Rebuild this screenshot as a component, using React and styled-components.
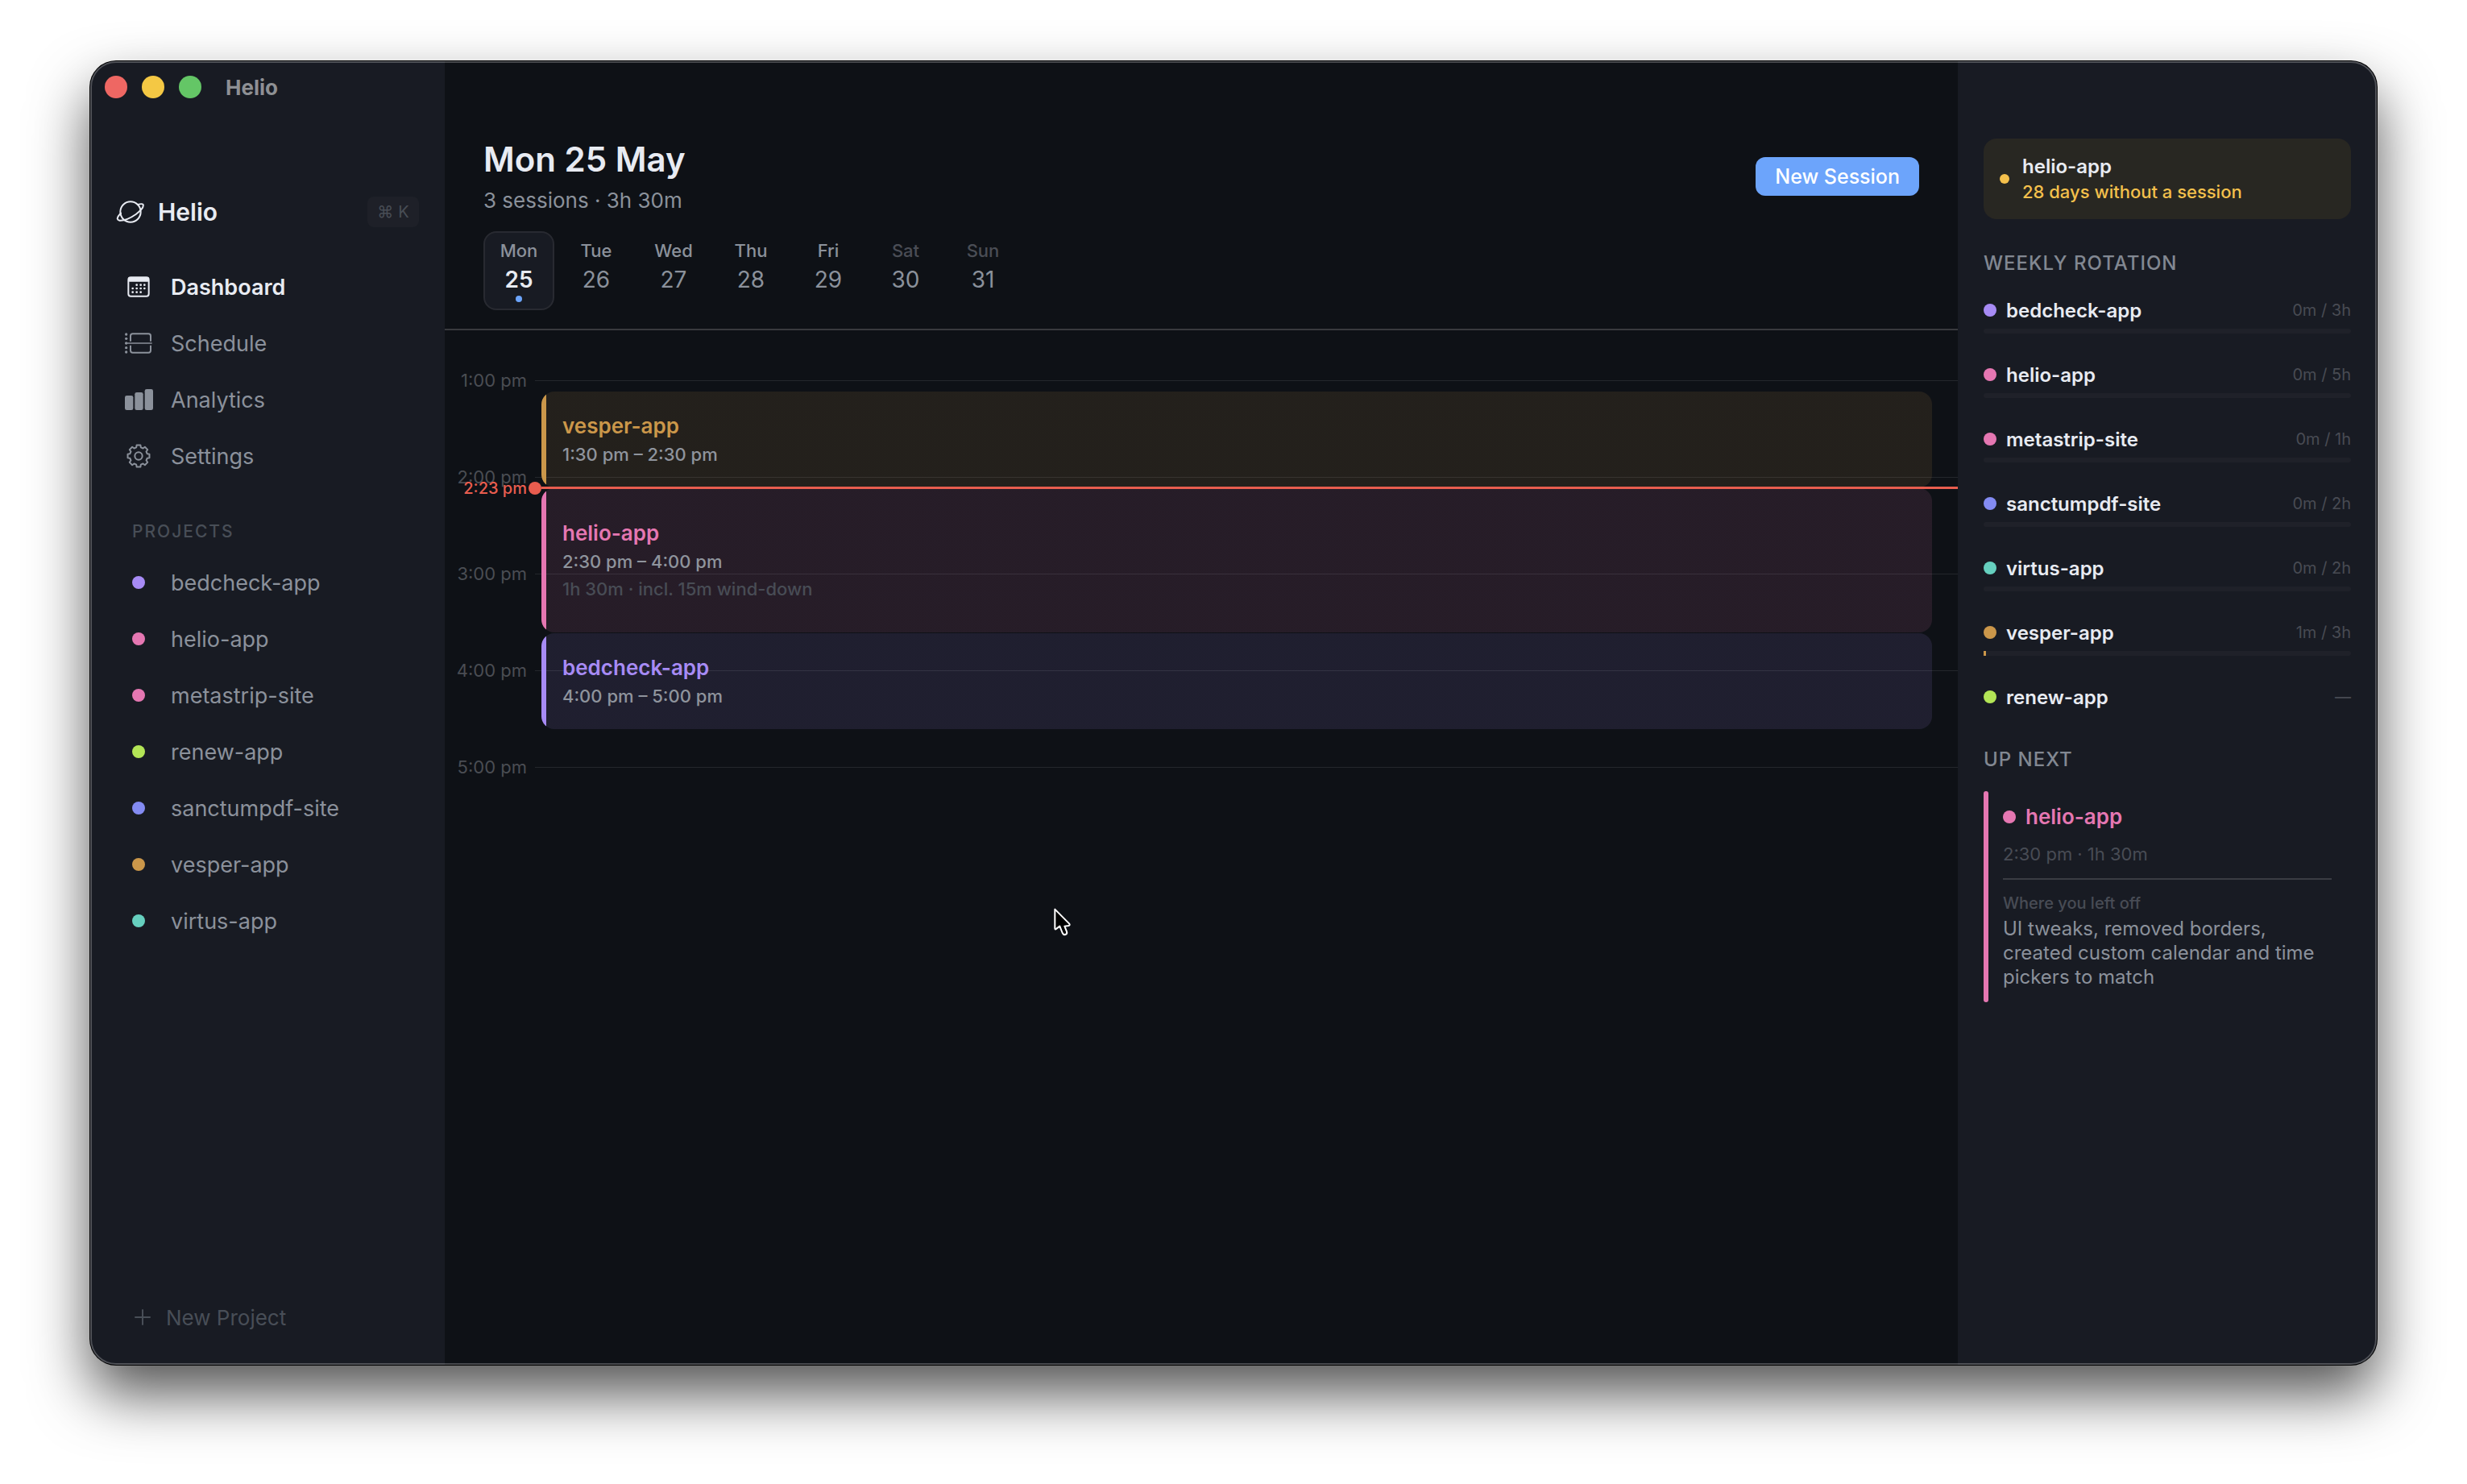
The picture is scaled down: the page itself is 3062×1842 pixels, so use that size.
import React from 'react';
import styled, { createGlobalStyle } from 'styled-components';

const colors = {
    violet: '#a78bf5',
    pink: '#e577b2',
    lime: '#b3e556',
    indigo: '#838bf2',
    amber: '#cb974a',
    teal: '#66d0bf',
};

const projects = [
    { name: 'bedcheck-app', color: colors.violet },
    { name: 'helio-app', color: colors.pink },
    { name: 'metastrip-site', color: colors.pink },
    { name: 'renew-app', color: colors.lime },
    { name: 'sanctumpdf-site', color: colors.indigo },
    { name: 'vesper-app', color: colors.amber },
    { name: 'virtus-app', color: colors.teal },
];

const days = [
    { name: 'Mon', date: 25, active: true },
    { name: 'Tue', date: 26 },
    { name: 'Wed', date: 27 },
    { name: 'Thu', date: 28 },
    { name: 'Fri', date: 29 },
    { name: 'Sat', date: 30, weekend: true },
    { name: 'Sun', date: 31, weekend: true },
];

const hours = ['1:00 pm', '2:00 pm', '3:00 pm', '4:00 pm', '5:00 pm'];

const sessions = [
    { name: 'vesper-app', color: colors.amber, time: '1:30 pm – 2:30 pm', minutes: 60 },
    { name: 'helio-app', color: colors.pink, time: '2:30 pm – 4:00 pm', minutes: 90, note: '1h 30m · incl. 15m wind-down' },
    { name: 'bedcheck-app', color: colors.violet, time: '4:00 pm – 5:00 pm', minutes: 60 },
];

const rotation = [
    { name: 'bedcheck-app', color: colors.violet, done: 0, target: 3 },
    { name: 'helio-app', color: colors.pink, done: 0, target: 5 },
    { name: 'metastrip-site', color: colors.pink, done: 0, target: 1 },
    { name: 'sanctumpdf-site', color: colors.indigo, done: 0, target: 2 },
    { name: 'virtus-app', color: colors.teal, done: 0, target: 2 },
    { name: 'vesper-app', color: colors.amber, done: 1, target: 3 },
    { name: 'renew-app', color: colors.lime },
];

// eight teeth around a 108 x 108 box
const gearPoints = Array.from({ length: 8 }, (_, i) =>
    [[-15, 33], [-10, 41], [10, 41], [15, 33]].map(([offset, r]) => {
        const a = ((i * 45 + offset) * Math.PI) / 180;
        return `${(54 + r * Math.sin(a)).toFixed(1)},${(54 - r * Math.cos(a)).toFixed(1)}`;
    }).join(' ')
).join(' ');

const PlanetIcon = () => (
    <svg width="36" height="30" viewBox="12 23 108 90" fill="none" stroke="currentColor" strokeWidth="6" strokeLinecap="round" aria-hidden="true">
        <circle cx="66" cy="68" r="38" />
        <path d="M93 41 Q110 36 113 41 Q117 54 86 77 Q50 102 25 100 Q11 97 22 82 Q25 77 30 73" />
    </svg>
);

const CalendarIcon = () => (
    <svg width="36" height="36" viewBox="0 0 108 108" fill="currentColor" aria-hidden="true">
        <rect x="16" y="19" width="76" height="70" rx="9" fill="none" stroke="currentColor" strokeWidth="6" />
        <rect x="15" y="18" width="78" height="17" rx="5" />
        {[[47, 47], [62, 47], [76, 47], [32, 60], [47, 60], [62, 60], [76, 60], [32, 74], [47, 74], [62, 74]].map(([x, y]) => (
            <circle key={`${x}-${y}`} cx={x} cy={y} r="4" />
        ))}
    </svg>
);

const ScheduleIcon = () => (
    <svg width="36" height="36" viewBox="0 0 108 108" fill="none" stroke="currentColor" strokeWidth="6" aria-hidden="true">
        <path d="M24 47 V27 Q24 19 32 19 H91 Q99 19 99 27 V47" />
        <path d="M24 62 V81 Q24 89 32 89 H91 Q99 89 99 81 V62" />
        <path d="M4 54 H104" strokeWidth="5" />
        {[21, 37, 54, 71, 87].map(y => <circle key={y} cx="8" cy={y} r="5" fill="currentColor" stroke="none" />)}
    </svg>
);

const AnalyticsIcon = () => (
    <svg width="36" height="36" viewBox="0 0 108 108" fill="currentColor" aria-hidden="true">
        <rect x="3" y="39" width="31" height="54" rx="7" />
        <rect x="40" y="27" width="31" height="66" rx="7" />
        <rect x="77" y="15" width="31" height="78" rx="7" />
    </svg>
);

const SettingsIcon = () => (
    <svg width="36" height="36" viewBox="0 0 108 108" fill="none" stroke="currentColor" strokeWidth="6" strokeLinejoin="round" aria-hidden="true">
        <polygon points={gearPoints} />
        <circle cx="54" cy="54" r="14" />
    </svg>
);

const PlusIcon = () => (
    <svg width="20" height="20" viewBox="0 0 20 20" fill="none" stroke="currentColor" strokeWidth="2" strokeLinecap="round" aria-hidden="true">
        <path d="M10 1 V19 M1 10 H19" />
    </svg>
);

const links = [
    { label: 'Dashboard', Icon: CalendarIcon, active: true },
    { label: 'Schedule', Icon: ScheduleIcon },
    { label: 'Analytics', Icon: AnalyticsIcon },
    { label: 'Settings', Icon: SettingsIcon },
];

const Sidebar = () => (
    <SidebarWrapper>
        <TitleBar>
            <Light aria-label="Close" $color="#ee6763" />
            <Light aria-label="Minimize" $color="#f4c844" />
            <Light aria-label="Zoom" $color="#64c666" />
            <WindowTitle>Helio</WindowTitle>
        </TitleBar>
        <Brand>
            <PlanetIcon />
            <BrandName>Helio</BrandName>
            <Shortcut aria-label="Search"><kbd>⌘</kbd><kbd>K</kbd></Shortcut>
        </Brand>
        <nav>
            {links.map(({ label, Icon, active }) => (
                <NavLink key={label} href={`#${label.toLowerCase()}`} $active={active}>
                    <Icon />{label}
                </NavLink>
            ))}
        </nav>
        <SidebarLabel>PROJECTS</SidebarLabel>
        <nav>
            {projects.map(p => (
                <NavLink key={p.name} href={`#${p.name}`}>
                    <DotSlot><Dot $color={p.color} /></DotSlot>{p.name}
                </NavLink>
            ))}
        </nav>
        <NewProject><PlusIcon />New Project</NewProject>
    </SidebarWrapper>
);

const Timeline = () => (
    <TimelineWrapper>
        {hours.map(hour => (
            <HourRow key={hour}>
                <HourLabel>{hour}</HourLabel>
                <HourLine />
            </HourRow>
        ))}
        <Sessions>
            {sessions.map(s => (
                <Session key={s.name} $color={s.color} style={{ height: s.minutes * 2 - 1 }}>
                    <SessionName $color={s.color}>{s.name}</SessionName>
                    <SessionText>{s.time}</SessionText>
                    {s.note && <SessionText $dim>{s.note}</SessionText>}
                </Session>
            ))}
        </Sessions>
        <Now>
            <NowLabel>2:23 pm</NowLabel>
            <Dot $color="#e85d4f" />
            <NowLine />
        </Now>
    </TimelineWrapper>
);

const Pointer = () => (
    <PointerSvg width="23" height="37" viewBox="81 78 69 111" aria-hidden="true">
        <path
            d="M88 86 V157 Q88 163 94 158 L106 149 L116 174 Q120 182 127 180 Q135 177 132 169 L124 149 L139 147 Q146 145 141 139 Z"
            fill="#000" stroke="#fff" strokeWidth="6" strokeLinejoin="round"
        />
    </PointerSvg>
);

const Dashboard = () => (
    <Main>
        <Header>
            <HeaderTop>
                <div>
                    <Title>Mon 25 May</Title>
                    <Subtitle>3 sessions · 3h 30m</Subtitle>
                </div>
                <PrimaryButton>New Session</PrimaryButton>
            </HeaderTop>
            <Days>
                {days.map(day => (
                    <Day key={day.name} $active={day.active}>
                        <DayName $dim={day.weekend}>{day.name}</DayName>
                        <DayDate>{day.date}</DayDate>
                        {day.active && <DayDot />}
                    </Day>
                ))}
            </Days>
        </Header>
        <Timeline />
        <Pointer />
    </Main>
);

const Panel = () => (
    <PanelWrapper>
        <Alert>
            <Dot $color="#f4c04c" $size={12} />
            <div>
                <AlertTitle>helio-app</AlertTitle>
                <AlertText>28 days without a session</AlertText>
            </div>
        </Alert>
        <PanelLabel>WEEKLY ROTATION</PanelLabel>
        <Rotation>
            {rotation.map(r => (
                <li key={r.name}>
                    <RotationRow>
                        <Dot $color={r.color} />
                        <RotationName>{r.name}</RotationName>
                        <RotationTime>{r.target ? `${r.done}m / ${r.target}h` : '—'}</RotationTime>
                    </RotationRow>
                    {r.target && (
                        <Track role="progressbar" aria-label={r.name} aria-valuenow={r.done} aria-valuemax={r.target * 60}>
                            {r.done > 0 && <Fill $color={r.color} style={{ width: `${(r.done / (r.target * 60)) * 100}%` }} />}
                        </Track>
                    )}
                </li>
            ))}
        </Rotation>
        <PanelLabel $next>UP NEXT</PanelLabel>
        <NextCard>
            <NextBar />
            <NextBody>
                <NextName><Dot $color={colors.pink} />helio-app</NextName>
                <NextTime>2:30 pm · 1h 30m</NextTime>
                <Divider />
                <NoteLabel>Where you left off</NoteLabel>
                <Note>UI tweaks, removed borders, created custom calendar and time pickers to match</Note>
            </NextBody>
        </NextCard>
    </PanelWrapper>
);

export default function App() {
    return (
        <Desktop>
            <GlobalStyle />
            <Window>
                <Sidebar />
                <Dashboard />
                <Panel />
            </Window>
        </Desktop>
    );
}

const GlobalStyle = createGlobalStyle`
* {
    box-sizing: border-box;
}
body {
    margin: 0;
    background: #fff;
    font-family: Inter, 'Liberation Sans', sans-serif;
}
h1, h2, h3, p, ul {
    margin: 0;
    padding: 0;
}
ul {
    list-style: none;
}
button {
    margin: 0;
    padding: 0;
    border: 0;
    background: none;
    font-family: inherit;
}
kbd {
    font-family: inherit;
    font-size: inherit;
}
svg {
    display: block;
    flex: none;
}
`;

const Desktop = styled.div`
display: flex;
min-height: 100vh;
padding: 76px 112px 148px;
`;

const Window = styled.div`
position: relative;
display: flex;
flex: 1;
overflow: hidden;
border-radius: 32px;
background: #0e1116;
box-shadow: 0 0 0 1px #000, 0 36px 72px rgba(0, 0, 0, .68);
&::after {
    content: '';
    position: absolute;
    inset: 0;
    border: 2px solid rgba(255, 255, 255, .24);
    border-radius: 32px;
    pointer-events: none;
}
`;

const Dot = styled.span`
flex: none;
width: ${p => p.$size || 16}px;
height: ${p => p.$size || 16}px;
border-radius: 50%;
background: ${p => p.$color};
`;

const SidebarWrapper = styled.aside`
display: flex;
flex: none;
flex-direction: column;
width: 440px;
background: #181b23;
`;

const TitleBar = styled.div`
display: flex;
align-items: center;
gap: 18px;
height: 64px;
padding-left: 18px;
`;

const Light = styled.button`
width: 28px;
height: 28px;
border-radius: 50%;
background: ${p => p.$color};
`;

const WindowTitle = styled.span`
margin-left: 12px;
color: #8e9094;
font-size: 26px;
font-weight: 700;
`;

const Brand = styled.div`
display: flex;
align-items: center;
height: 38px;
margin: 104px 32px 39px;
color: #e8ebf2;
`;

const BrandName = styled.span`
margin-left: 16px;
font-size: 30px;
font-weight: 600;
`;

const Shortcut = styled.button`
display: flex;
align-items: center;
justify-content: center;
gap: 6px;
width: 64px;
height: 38px;
margin-left: auto;
border-radius: 8px;
background: #1e2028;
color: #484d55;
font-size: 20px;
`;

const NavLink = styled.a`
display: flex;
align-items: center;
gap: 22px;
height: 70px;
padding-left: 42px;
color: ${p => p.$active ? '#e8ebf2' : '#8b919b'};
font-size: 27px;
font-weight: ${p => p.$active ? 600 : 400};
text-decoration: none;
`;

const DotSlot = styled.span`
display: flex;
justify-content: center;
width: 36px;
`;

const SidebarLabel = styled.h2`
margin: 45px 0 14px 52px;
color: #484e57;
font-size: 21px;
font-weight: 500;
line-height: 28px;
letter-spacing: 2px;
`;

const NewProject = styled.button`
display: flex;
align-items: center;
gap: 19px;
height: 40px;
margin: auto 0 39px 55px;
color: #484e57;
font-size: 26px;
`;

const Main = styled.main`
position: relative;
flex: 1;
min-width: 0;
`;

const Header = styled.header`
padding: 96px 48px 23px;
border-bottom: 2px solid #393a3e;
`;

const HeaderTop = styled.div`
display: flex;
align-items: center;
justify-content: space-between;
`;

const Title = styled.h1`
color: #e8ebf2;
font-size: 42px;
font-weight: 600;
line-height: 52px;
`;

const Subtitle = styled.p`
margin-top: 8px;
color: #8b919b;
font-size: 26px;
line-height: 34px;
`;

const PrimaryButton = styled.button`
height: 48px;
padding: 0 24px;
border-radius: 12px;
background: #6ca4fb;
color: #fff;
font-size: 25px;
font-weight: 500;
`;

const Days = styled.div`
display: flex;
gap: 8px;
margin-top: 21px;
`;

const Day = styled.button`
display: flex;
flex-direction: column;
align-items: center;
width: 88px;
height: 98px;
padding-top: 8px;
border: 2px solid ${p => p.$active ? '#282a31' : 'transparent'};
border-radius: 16px;
background: ${p => p.$active ? '#181b23' : 'transparent'};
color: ${p => p.$active ? '#e8ebf2' : '#8b919b'};
font-weight: ${p => p.$active ? 600 : 400};
`;

const DayName = styled.span`
color: ${p => p.$dim ? '#4a4d55' : '#8b919b'};
font-size: 22px;
font-weight: 500;
line-height: 28px;
`;

const DayDate = styled.span`
margin-top: 4px;
font-size: 28px;
line-height: 36px;
`;

const DayDot = styled.span`
width: 8px;
height: 8px;
margin-top: 2px;
border-radius: 50%;
background: #6ca4fb;
`;

const TimelineWrapper = styled.section`
position: relative;
padding-top: 50px;
`;

const HourRow = styled.div`
display: flex;
gap: 10px;
height: 120px;
`;

const HourLabel = styled.span`
width: 102px;
color: #4a4d53;
font-size: 22px;
line-height: 24px;
text-align: right;
white-space: nowrap;
`;

const HourLine = styled.span`
flex: 1;
height: 1px;
margin-top: 12px;
background: #24272c;
`;

const Sessions = styled.div`
position: absolute;
top: 76px;
left: 120px;
right: 32px;
display: flex;
flex-direction: column;
gap: 1px;
`;

const Session = styled.article`
display: flex;
flex-direction: column;
justify-content: center;
padding-left: 26px;
border-radius: 16px;
background: linear-gradient(to right, ${p => p.$color} 6px, ${p => p.$color}1d 6px);
`;

const SessionName = styled.h3`
color: ${p => p.$color};
font-size: 26px;
font-weight: 600;
line-height: 36px;
`;

const SessionText = styled.p`
color: ${p => p.$dim ? '#484c55' : '#8f949d'};
font-size: 22px;
font-weight: 500;
line-height: 34px;
`;

const Now = styled.div`
position: absolute;
top: 183px;
left: 0;
right: 0;
display: flex;
align-items: center;
height: 25px;
`;

const NowLabel = styled.span`
width: 102px;
margin-right: 2px;
color: #e85d4f;
font-size: 20px;
font-weight: 500;
text-align: right;
`;

const NowLine = styled.span`
flex: 1;
height: 3px;
background: #e85d4f;
`;

const PointerSvg = styled.svg`
position: absolute;
top: 1050px;
left: 755px;
`;

const PanelWrapper = styled.aside`
flex: none;
width: 520px;
padding: 96px 32px 0;
background: #181b23;
`;

const Alert = styled.div`
display: flex;
align-items: center;
gap: 16px;
height: 100px;
padding-left: 20px;
border-radius: 16px;
background: #282722;
`;

const AlertTitle = styled.h3`
color: #e8ebf2;
font-size: 24px;
font-weight: 600;
line-height: 32px;
`;

const AlertText = styled.p`
color: #f4c04c;
font-size: 22px;
font-weight: 500;
line-height: 30px;
`;

const PanelLabel = styled.h2`
margin: ${p => p.$next ? '48px 0 24px' : '40px 0 28px'};
color: #828892;
font-size: 24px;
font-weight: 500;
line-height: 30px;
letter-spacing: 1px;
`;

const Rotation = styled.ul`
display: flex;
flex-direction: column;
gap: 36px;
`;

const RotationRow = styled.div`
display: flex;
align-items: center;
gap: 12px;
height: 30px;
`;

const RotationName = styled.span`
flex: 1;
color: #e8ebf2;
font-size: 24px;
font-weight: 600;
`;

const RotationTime = styled.span`
color: #484b53;
font-size: 20px;
`;

const Track = styled.div`
height: 6px;
margin-top: 8px;
border-radius: 3px;
background: #1f2129;
`;

const Fill = styled.div`
min-width: 3px;
height: 6px;
background: ${p => p.$color};
`;

const NextCard = styled.article`
display: flex;
`;

const NextBar = styled.span`
flex: none;
width: 6px;
border-radius: 3px;
background: ${colors.pink};
`;

const NextBody = styled.div`
flex: 1;
padding: 16px 24px 16px 18px;
`;

const NextName = styled.h3`
display: flex;
align-items: center;
gap: 12px;
color: ${colors.pink};
font-size: 26px;
font-weight: 600;
line-height: 32px;
`;

const NextTime = styled.p`
margin-top: 16px;
color: #484c55;
font-size: 22px;
line-height: 28px;
`;

const Divider = styled.hr`
height: 2px;
margin: 16px 0;
border: 0;
background: #3a3c43;
`;

const NoteLabel = styled.p`
color: #484c55;
font-size: 20px;
font-weight: 500;
line-height: 26px;
`;

const Note = styled.p`
margin-top: 4px;
color: #8b919b;
font-size: 24px;
line-height: 30px;
`;
